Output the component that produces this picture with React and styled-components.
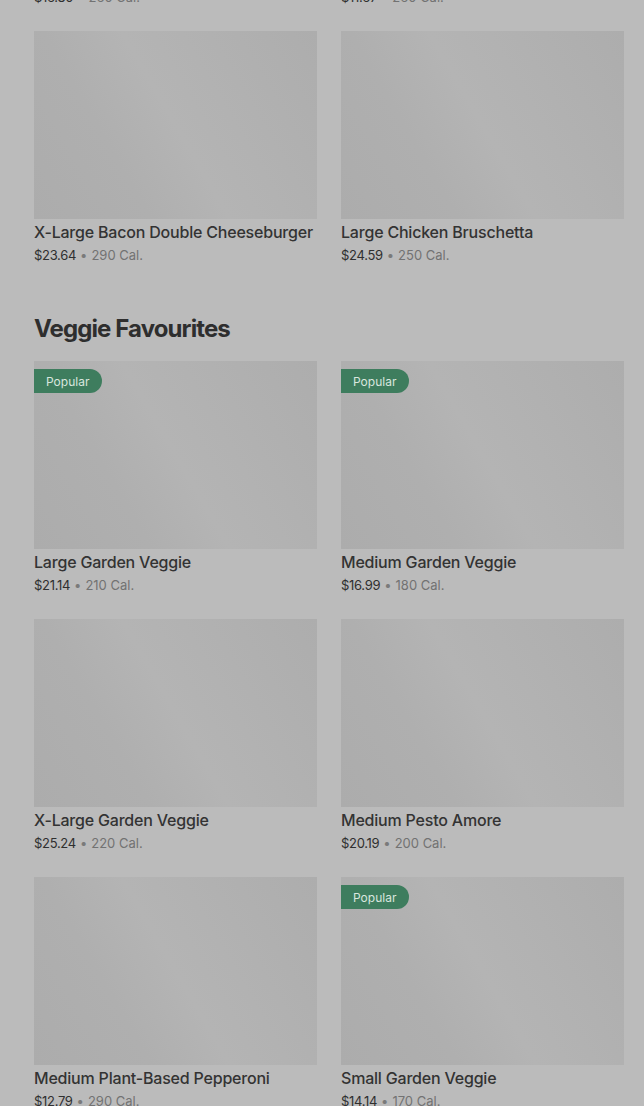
import React from 'react';
import styled, {createGlobalStyle} from 'styled-components';

const GlobalStyle = createGlobalStyle`
  html, body {
    margin: 0;
    padding: 0;
    background: #bbbbbb;
    font-family: Inter, "Noto Sans", sans-serif;
    overflow: hidden;
  }
`;

const Page = styled.div`
  padding: 0 20px 0 34px;
  margin-top: -227px;
`;

const Section = styled.section`
  margin-bottom: 49px;
`;

const Heading = styled.h2`
  margin: 0 0 16px;
  font-size: 24px;
  line-height: 32px;
  font-weight: 700;
  letter-spacing: -0.9px;
  color: #2e2e2e;
`;

const Grid = styled.div`
  display: grid;
  grid-template-columns: minmax(0, 1fr) minmax(0, 1fr);
  column-gap: 24px;
  row-gap: 25px;
`;

const Card = styled.div`
  display: flex;
  flex-direction: column;
`;

const Thumb = styled.div`
  position: relative;
  height: 188px;
  background: linear-gradient(
    60deg,
    #acacac 0%,
    #afafaf 30%,
    #b4b4b4 50%,
    #b2b2b2 65%,
    #adadad 100%
  );
`;

const Badge = styled.span`
  position: absolute;
  top: 8px;
  left: 0;
  height: 24px;
  padding: 0 13px 0 12px;
  display: flex;
  align-items: center;
  font-size: 12px;
  color: #d9e6de;
  background: #3e7d5e;
  border-radius: 0 12px 12px 0;
`;

const Name = styled.div`
  margin-top: 2px;
  font-size: 16px;
  line-height: 22px;
  font-weight: 500;
  letter-spacing: -0.2px;
  color: #333333;
  white-space: nowrap;
`;

const Meta = styled.div`
  margin-top: 3px;
  font-size: 13px;
  line-height: 18px;
  color: #727272;
`;

const Price = styled.span`
  color: #2f2f2f;
  letter-spacing: -0.3px;
`;

const Dot = styled.span`
  margin: 0 4px;
  color: #7a7a7a;
`;

const Item = ({name, price, cal, popular}) => (
  <Card>
    <Thumb>{popular && <Badge>Popular</Badge>}</Thumb>
    <Name>{name}</Name>
    <Meta>
      <Price>{price}</Price>
      <Dot>•</Dot>
      {cal} Cal.
    </Meta>
  </Card>
);

const meatItems = [
  {name: 'Medium Bacon Cheeseburger', price: '$16.80', cal: 260},
  {name: 'Small Chicken Bruschetta', price: '$11.67', cal: 260},
  {name: 'X-Large Bacon Double Cheeseburger', price: '$23.64', cal: 290},
  {name: 'Large Chicken Bruschetta', price: '$24.59', cal: 250},
];

const veggieItems = [
  {name: 'Large Garden Veggie', price: '$21.14', cal: 210, popular: true},
  {name: 'Medium Garden Veggie', price: '$16.99', cal: 180, popular: true},
  {name: 'X-Large Garden Veggie', price: '$25.24', cal: 220},
  {name: 'Medium Pesto Amore', price: '$20.19', cal: 200},
  {name: 'Medium Plant-Based Pepperoni', price: '$12.79', cal: 290},
  {name: 'Small Garden Veggie', price: '$14.14', cal: 170, popular: true},
];

export default function App() {
  return (
    <>
      <GlobalStyle />
      <Page>
        <Section>
          <Grid>
            {meatItems.map(item => (
              <Item key={item.name} {...item} />
            ))}
          </Grid>
        </Section>
        <Section>
          <Heading>Veggie Favourites</Heading>
          <Grid>
            {veggieItems.map(item => (
              <Item key={item.name} {...item} />
            ))}
          </Grid>
        </Section>
      </Page>
    </>
  );
}
